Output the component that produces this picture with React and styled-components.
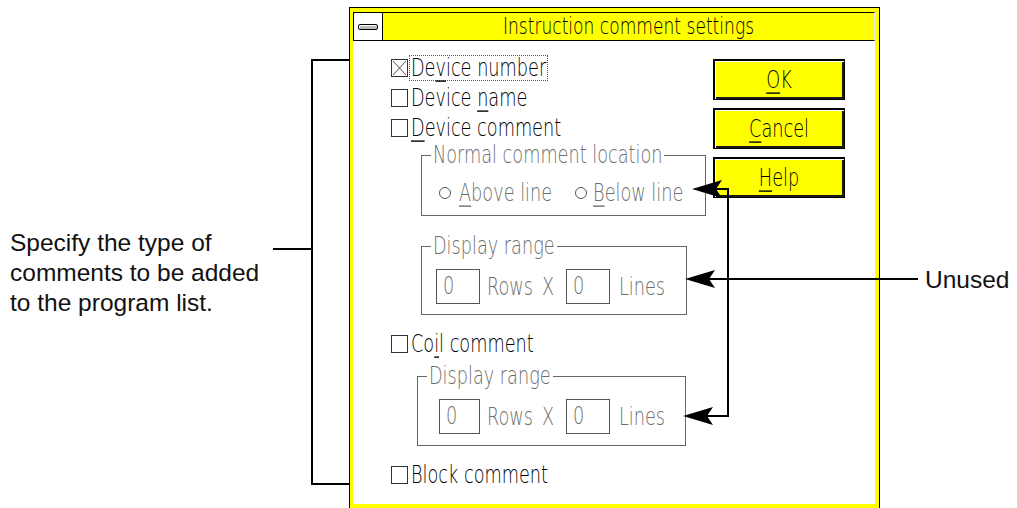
import React from 'react';
import styled, { createGlobalStyle } from 'styled-components';

const uiFont = `"DejaVu Sans", "Liberation Sans", sans-serif`;
const noteFont = `"Liberation Sans", Arial, sans-serif`;
const uiSize = '17.7px';

const GlobalStyle = createGlobalStyle`
  html, body {
    margin: 0;
    padding: 0;
    background: #fff;
  }
  body {
    overflow: hidden;
  }
`;

const Page = styled.div`
  position: relative;
  width: 1017px;
  height: 508px;
  overflow: hidden;
  display: flex;
  align-items: flex-start;
`;

const LeftNote = styled.p`
  flex: 0 0 349px;
  box-sizing: border-box;
  margin: 0;
  padding: 228px 0 0 10px;
  font: 24.5px/30px ${noteFont};
  color: #111;
`;

const RightNote = styled.p`
  flex: 1;
  margin: 0;
  padding: 265px 0 0 45px;
  font: 24.5px/30px ${noteFont};
  color: #111;
`;

// the dialog font of the original is a tall, narrow, thin bitmap face
const Tall = styled.span`
  display: inline-block;
  white-space: nowrap;
  transform: scaleY(1.38);
`;

const Window = styled.div`
  flex: 0 0 auto;
  width: 531px;
  height: 502px;
  box-sizing: border-box;
  margin-top: 7px;
  border: 1px solid #000;
  padding: 4px 4px 4px 3px;
  background: #ffff00;
  display: flex;
  flex-direction: column;
`;

const TitleBar = styled.div`
  display: flex;
  height: 29px;
  box-sizing: border-box;
  border: 1px solid #000;
  border-right-color: #e6e6e6;
  background: #ffff00;
`;

const SysMenu = styled.div`
  width: 29px;
  box-sizing: border-box;
  border-right: 1px solid #000;
  background: #fff;
  display: flex;
  align-items: center;
  justify-content: center;
`;

const SysBar = styled.span`
  width: 20px;
  height: 6px;
  box-sizing: border-box;
  border: 1px solid #000;
  border-radius: 2px;
  background: #bdbdbd;
  box-shadow: inset 1px 1px 0 #fff;
`;

const Title = styled.div`
  flex: 1;
  text-align: center;
  font: 200 17.1px/27px ${uiFont};
  color: #000;
`;

const Client = styled.div`
  flex: 1;
  display: flex;
  background: #fff;
`;

const Options = styled.div`
  flex: 0 0 360px;
  box-sizing: border-box;
  padding: 12px 0 0 38px;
  display: flex;
  flex-direction: column;
  align-items: flex-start;
`;

const Buttons = styled.div`
  display: flex;
  flex-direction: column;
  gap: 8px;
  padding-top: 18px;
`;

const Button = styled.button`
  width: 132px;
  height: 41px;
  box-sizing: border-box;
  margin: 0;
  padding: 0;
  border: 1px solid #000;
  box-shadow: inset 1px 1px 0 #000, inset 2px 2px 0 #fff, inset -2px -2px 0 #1a1a1a;
  background: #ffff00;
  font: 200 ${uiSize}/24px ${uiFont};
  color: #000;
`;

const Key = styled.u`
  text-decoration: underline;
  text-decoration-thickness: 1px;
  text-underline-offset: 3px;
`;

const CheckRow = styled.div`
  display: flex;
  align-items: center;
  height: 30px;
  margin-top: ${p => p.$top || 0}px;
  font: 200 ${uiSize}/24px ${uiFont};
  color: #000;
`;

const Box = styled.span`
  width: 17px;
  height: 18px;
  box-sizing: border-box;
  margin-right: 1px;
  border: 1px solid #333;
  display: flex;
  svg {
    width: 100%;
    height: 100%;
  }
`;

const CheckLabel = styled.span`
  padding: 0 1px;
  border: 1px dotted ${p => (p.$focused ? '#555' : 'transparent')};
`;

const Group = styled.fieldset`
  box-sizing: border-box;
  width: ${p => p.$width}px;
  min-inline-size: 0;
  margin: ${p => p.$top}px 0 0 ${p => p.$indent}px;
  padding: 0 0 ${p => p.$bottom}px 9px;
  border: 1px solid #666;
`;

const GroupTitle = styled.legend`
  padding: 0 2px;
  font: 200 ${uiSize}/25px ${uiFont};
  color: #6e6e6e;
`;

const RadioRow = styled.div`
  display: flex;
  align-items: center;
  height: 30px;
  margin-top: 10px;
  padding-left: 8px;
  font: 200 ${uiSize}/24px ${uiFont};
  color: #6e6e6e;
`;

const RadioItem = styled.span`
  display: flex;
  align-items: center;
  margin-left: ${p => p.$gap || 0}px;
`;

const Circle = styled.span`
  width: 12px;
  height: 12px;
  box-sizing: border-box;
  margin-right: ${p => p.$gap}px;
  border: 1px solid #555;
  border-radius: 50%;
`;

const FieldRow = styled.div`
  display: flex;
  align-items: center;
  margin-top: 10px;
  padding-left: ${p => p.$pad}px;
  font: 200 ${uiSize}/24px ${uiFont};
  color: #6e6e6e;
`;

const NumBox = styled.span`
  width: ${p => p.$width}px;
  height: 35px;
  box-sizing: border-box;
  padding-left: 6px;
  border: 1px solid #555;
  line-height: 33px;
`;

const FieldText = styled.span`
  width: ${p => p.$width}px;
  margin-left: ${p => p.$gap || 0}px;
`;

const Overlay = styled.svg`
  position: absolute;
  inset: 0;
  pointer-events: none;
`;

const CheckBox = ({ checked, focused, children, top }) => (
  <CheckRow $top={top}>
    <Box>
      {checked && (
        <svg viewBox="0 0 17 18">
          <path d="M1 1 L16 17 M16 1 L1 17" stroke="#333" strokeWidth="1" fill="none" />
        </svg>
      )}
    </Box>
    <CheckLabel $focused={focused}>
      <Tall>{children}</Tall>
    </CheckLabel>
  </CheckRow>
);

const RangeGroup = ({ top, indent, width, bottom, pad, firstWidth }) => (
  <Group $top={top} $indent={indent} $width={width} $bottom={bottom}>
    <GroupTitle>
      <Tall>Display range</Tall>
    </GroupTitle>
    <FieldRow $pad={pad}>
      <NumBox $width={firstWidth}>
        <Tall>0</Tall>
      </NumBox>
      <FieldText $gap={7} $width={55}>
        <Tall>Rows</Tall>
      </FieldText>
      <FieldText $width={24}>
        <Tall>X</Tall>
      </FieldText>
      <NumBox $width={44}>
        <Tall>0</Tall>
      </NumBox>
      <FieldText $gap={9}>
        <Tall>Lines</Tall>
      </FieldText>
    </FieldRow>
  </Group>
);

export default function App() {
  return (
    <Page>
      <GlobalStyle />
      <LeftNote>
        Specify the type of
        <br />
        comments to be added
        <br />
        to the program list.
      </LeftNote>

      <Window>
        <TitleBar>
          <SysMenu>
            <SysBar />
          </SysMenu>
          <Title>
            <Tall>Instruction comment settings</Tall>
          </Title>
        </TitleBar>
        <Client>
          <Options>
            <CheckBox checked focused>
              De<Key>v</Key>ice number
            </CheckBox>
            <CheckBox>
              Device <Key>n</Key>ame
            </CheckBox>
            <CheckBox>
              <Key>D</Key>evice comment
            </CheckBox>

            <Group $top={0} $indent={30} $width={285} $bottom={7}>
              <GroupTitle>
                <Tall>Normal comment location</Tall>
              </GroupTitle>
              <RadioRow>
                <RadioItem>
                  <Circle $gap={8} />
                  <Tall>
                    <Key>A</Key>bove line
                  </Tall>
                </RadioItem>
                <RadioItem $gap={23}>
                  <Circle $gap={6} />
                  <Tall>
                    <Key>B</Key>elow line
                  </Tall>
                </RadioItem>
              </RadioRow>
            </Group>

            <RangeGroup top={18} indent={30} width={266} bottom={10} pad={5} firstWidth={44} />

            <CheckBox top={14}>
              Co<Key>i</Key>l comment
            </CheckBox>

            <RangeGroup top={5} indent={26} width={269} bottom={11} pad={12} firstWidth={41} />

            <CheckBox top={14}>Block comment</CheckBox>
          </Options>

          <Buttons>
            <Button>
              <Tall>
                <Key>O</Key>K
              </Tall>
            </Button>
            <Button>
              <Tall>
                <Key>C</Key>ancel
              </Tall>
            </Button>
            <Button>
              <Tall>
                <Key>H</Key>elp
              </Tall>
            </Button>
          </Buttons>
        </Client>
      </Window>

      <RightNote>Unused</RightNote>

      <Overlay width="1017" height="508" viewBox="0 0 1017 508">
        <g stroke="#000" strokeWidth="2" fill="none">
          <path d="M350 60 H312 V484 H350 M273 249 H312" />
          <path d="M918 279 H708" />
          <path d="M712 189 H728 V416 H706" />
        </g>
        <g fill="#000">
          <path d="M685 279 L715 270 L709 279 L715 288 Z" />
          <path d="M692 189 L722 180 L716 189 L722 198 Z" />
          <path d="M683 416 L713 407 L707 416 L713 425 Z" />
        </g>
      </Overlay>
    </Page>
  );
}
